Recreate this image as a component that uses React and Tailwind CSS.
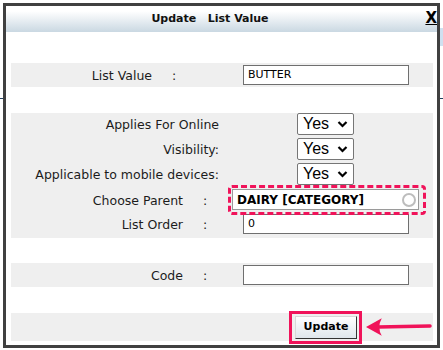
const font = "font-['DejaVu_Sans',sans-serif]"
const label = `${font} text-[12.5px] text-[#1c1c1c] leading-none pt-[3px]`

function YesSelect() {
  return (
    <div className="w-[57px] h-[22px] border border-[#767676] rounded-[2px] bg-white flex items-center pl-[5px] pr-[5px]">
      <span className="font-['Liberation_Sans',sans-serif] text-[16px] leading-none text-black">Yes</span>
      <svg className="ml-auto" width="11" height="8" viewBox="0 0 11 8">
        <path d="M1.5 2 L5.5 6 L9.5 2" fill="none" stroke="black" strokeWidth="2.2" />
      </svg>
    </div>
  )
}

function TextBox({ value, w = 'w-[166px]' }) {
  return (
    <div className={`${w} h-[20px] border border-[#6f6f6f] bg-white flex items-center pl-[4px] ${font} text-[11px] text-black`}>
      {value}
    </div>
  )
}

function Band({ className = '', children }) {
  return <div className={`ml-[5px] mr-[4px] bg-[#efefef] ${className}`}>{children}</div>
}

export default function App() {
  return (
    <div className="relative w-[443px] h-[350px] bg-white overflow-hidden">
      {/* page behind the dialog */}
      <div className="absolute left-0 right-0 top-[98px] h-[1px] bg-[#23415f]" />
      <div className="absolute right-0 top-[28px] w-[4px] h-[18px] bg-[#cfe0f0]" />

      <div className="absolute left-[3px] top-[3px] w-[437px] h-[345px] border-[3px] border-[#404040] bg-white flex flex-col">
        {/* header */}
        <div className="relative h-[26px] bg-gradient-to-b from-white from-20% to-[#cad8e2] flex items-center justify-center pr-[23px]">
          <span className={`${font} text-[11px] font-bold text-[#111] whitespace-pre`}>Update   List Value</span>
          <span className={`${font} absolute right-0 top-[5px] text-[15px] leading-none font-bold underline text-black`}>X</span>
        </div>

        {/* list value */}
        <Band className="mt-[31px] h-[24px] flex items-center">
          <div className={`w-[141px] text-right ${label}`}>List Value</div>
          <div className={`w-[91px] pl-[20px] ${label}`}>:</div>
          <TextBox value="BUTTER" />
        </Band>

        {/* flags + parent */}
        <Band className="mt-[26px] h-[125px] flex flex-col">
          {['Applies For Online', 'Visibility:', 'Applicable to mobile devices:'].map((t, i) => (
            <div key={t} className={`flex items-center h-[22px] ${i ? 'mt-[3px]' : ''}`}>
              <div className={`w-[208px] text-right ${label}`}>{t}</div>
              <div className="w-[78px]" />
              <YesSelect />
            </div>
          ))}

          <div className="flex items-center h-[23px] mt-[3px]">
            <div className={`w-[172px] text-right ${label}`}>Choose Parent</div>
            <div className={`w-[49px] pl-[20px] ${label}`}>:</div>
            <div className="relative">
              <div className="w-[187px] h-[21px] border border-[#9a9a9a] bg-white flex items-center pl-[4px] pr-[2px]">
                <span className={`${font} text-[12px] font-bold leading-none text-black`}>DAIRY [CATEGORY]</span>
                <span className="ml-auto w-[14px] h-[14px] rounded-full border-[2.5px] border-[#bdbdbd]" />
              </div>
              <div className="absolute -left-[4px] -right-[7px] -top-[4px] -bottom-[5px] border-[3px] border-dashed border-[#f0135a] rounded-[4px]" />
            </div>
          </div>

          <div className="flex items-center h-[22px] mt-[2px]">
            <div className={`w-[172px] text-right ${label}`}>List Order</div>
            <div className={`w-[60px] pl-[20px] ${label}`}>:</div>
            <TextBox value="0" />
          </div>
        </Band>

        {/* code */}
        <Band className="mt-[25px] h-[24px] flex items-center">
          <div className={`w-[172px] text-right ${label}`}>Code</div>
          <div className={`w-[60px] pl-[20px] ${label}`}>:</div>
          <TextBox value="" />
        </Band>

        {/* actions */}
        <Band className="mt-[26px] h-[28px] flex items-center pl-[284px]">
          <div className="relative">
            <div className={`w-[62px] h-[23px] flex items-center justify-center border border-t-[#d8d8d8] border-l-[#d8d8d8] border-r-[#333] border-b-[#333] bg-gradient-to-b from-white to-[#dfe6ec] ${font} text-[11px] font-bold text-black`}>
              Update
            </div>
            <div className="absolute -left-[6px] -right-[5px] -top-[5px] -bottom-[5px] border-[3px] border-[#f0135a]" />
          </div>
          <svg className="ml-[9px]" width="68" height="20" viewBox="0 0 68 20">
            <path d="M12 10 L65 9" stroke="#f0135a" strokeWidth="3.5" strokeLinecap="round" fill="none" />
            <path d="M0 10 L16 1 Q11 10 16 19 Z" fill="#f0135a" />
          </svg>
        </Band>
      </div>
    </div>
  )
}
